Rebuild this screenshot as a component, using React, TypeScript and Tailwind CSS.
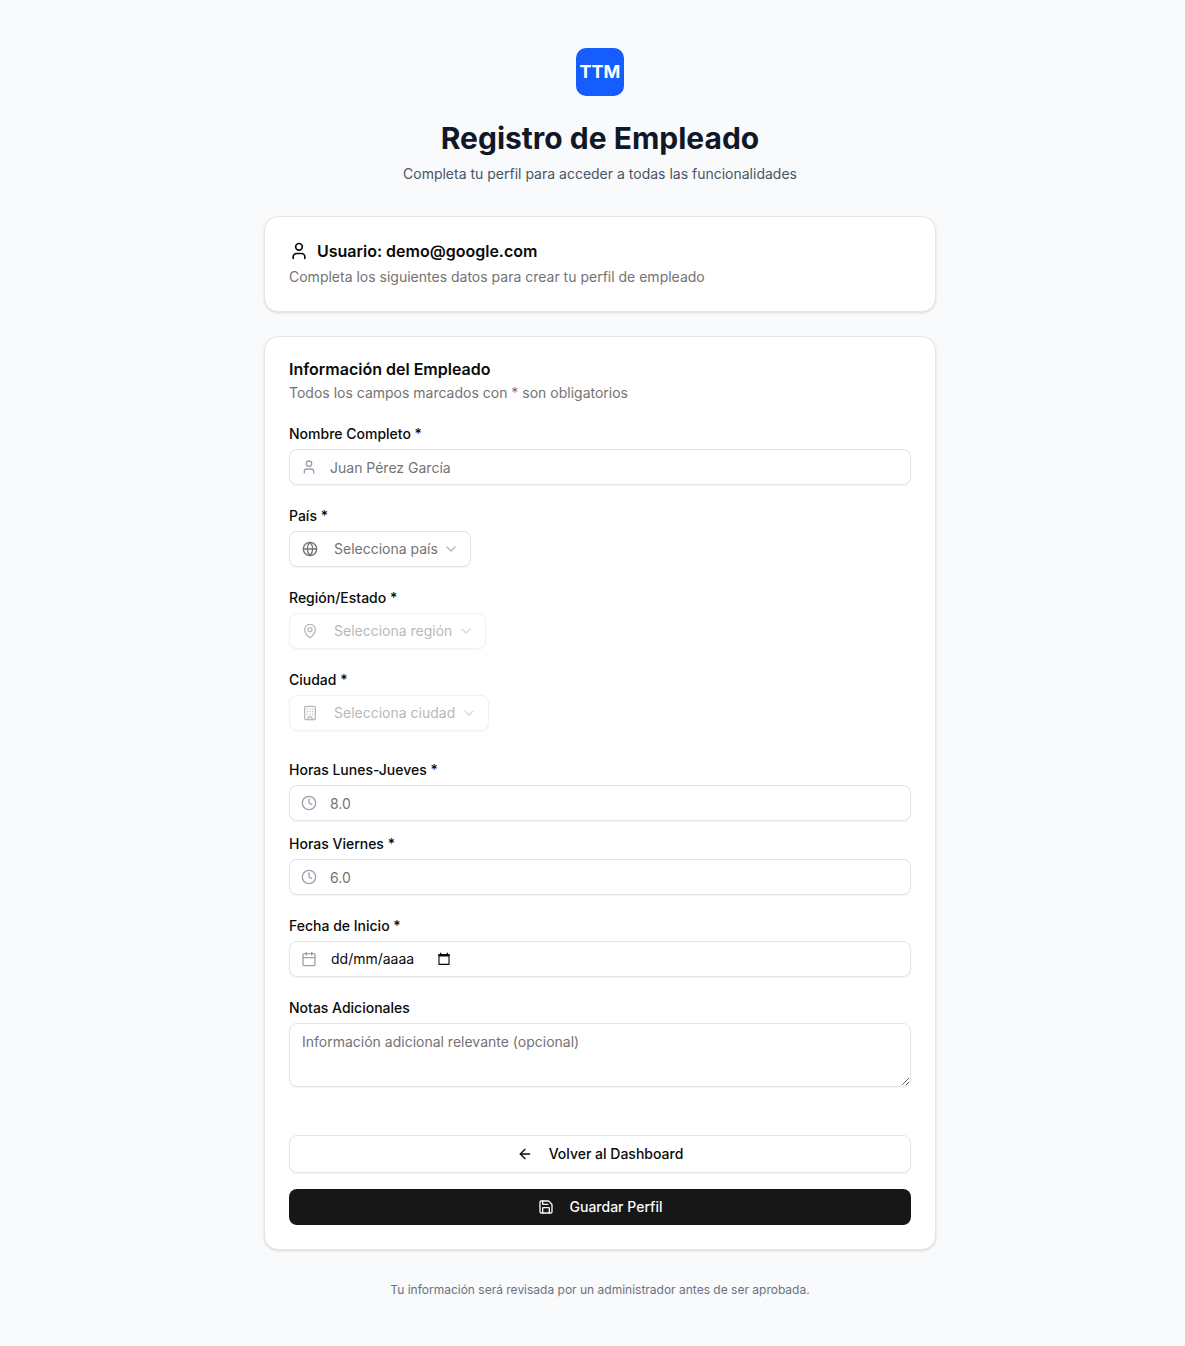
import type { ReactNode } from 'react';
import {
  ArrowLeft,
  Building,
  Calendar,
  ChevronDown,
  Clock,
  Globe,
  MapPin,
  Save,
  User,
  type LucideIcon,
} from 'lucide-react';

const inputBase =
  'block w-full rounded-[8px] border border-[#e5e5e5] bg-white text-sm text-[#0a0a0a] shadow-xs outline-none placeholder:text-[#737373] placeholder:opacity-100 focus:border-[#a1a1a1]';

function Field({ id, label, children }: { id: string; label: string; children: ReactNode }) {
  return (
    <div className="flex flex-col gap-2">
      <label htmlFor={id} className="text-sm leading-[14px] font-medium">
        {label}
      </label>
      {children}
    </div>
  );
}

function IconInput({
  id,
  label,
  placeholder,
  icon: Icon,
}: {
  id: string;
  label: string;
  placeholder: string;
  icon: LucideIcon;
}) {
  return (
    <Field id={id} label={label}>
      <div className="relative">
        <Icon className="pointer-events-none absolute inset-y-0 left-3 my-auto size-4 text-[#99a1af]" />
        <input id={id} placeholder={placeholder} className={`${inputBase} h-9 pr-3 pl-10`} />
      </div>
    </Field>
  );
}

function IconSelect({
  id,
  label,
  placeholder,
  icon: Icon,
  disabled = false,
}: {
  id: string;
  label: string;
  placeholder: string;
  icon: LucideIcon;
  disabled?: boolean;
}) {
  return (
    <Field id={id} label={label}>
      <div className={`relative w-fit text-[#737373] ${disabled ? 'opacity-50' : ''}`}>
        <Icon className="pointer-events-none absolute inset-y-0 left-[13px] my-auto size-4" />
        <select
          id={id}
          disabled={disabled}
          defaultValue=""
          className="block h-9 appearance-none rounded-[8px] border border-[#e5e5e5] bg-white pr-8 pl-11 text-sm shadow-xs outline-none disabled:opacity-100"
        >
          <option value="">{placeholder}</option>
        </select>
        <ChevronDown className="pointer-events-none absolute inset-y-0 right-3 my-auto size-4 opacity-50" />
      </div>
    </Field>
  );
}

function DateField() {
  return (
    <Field id="fecha" label="Fecha de Inicio *">
      <div className="flex h-9 items-center rounded-[8px] border border-[#e5e5e5] bg-white pl-[11px] shadow-xs">
        <Calendar className="mr-3.5 size-4 shrink-0 text-[#99a1af]" />
        <input
          id="fecha"
          placeholder="dd/mm/aaaa"
          className="w-[106px] bg-transparent text-sm outline-none placeholder:text-[#0a0a0a] placeholder:opacity-100"
        />
        <button type="button" aria-label="Abrir calendario">
          <svg viewBox="0 0 14 14" className="size-3.5" fill="none">
            <path d="M2 2.5h10v9.9H2z" stroke="#0a0a0a" strokeWidth="1.1" />
            <path d="M1.5 2h11v2.6h-11zM3 .8h1.3v2H3zM9.7.8H11v2H9.7z" fill="#0a0a0a" />
          </svg>
        </button>
      </div>
    </Field>
  );
}

export default function App() {
  return (
    <div className="min-h-screen bg-[#f9fafb] py-12 pl-[15px] font-['Inter',sans-serif] text-[#0a0a0a]">
      <main className="mx-auto max-w-2xl">
        <header className="flex flex-col items-center text-center">
          <div className="flex size-12 items-center justify-center rounded-[10px] bg-[#155dfc] text-lg font-bold text-white">
            TTM
          </div>
          <h1 className="mt-6 text-3xl leading-9 font-bold text-[#101828]">Registro de Empleado</h1>
          <p className="mt-2 text-sm text-[#4a5565]">Completa tu perfil para acceder a todas las funcionalidades</p>
        </header>

        <section className="mt-8 flex flex-col gap-1.5 rounded-[14px] border border-[#e5e5e5] bg-white p-6 shadow-sm">
          <h2 className="flex items-center gap-2 leading-5 font-semibold">
            <User className="size-5" />
            Usuario: demo@google.com
          </h2>
          <p className="text-sm text-[#737373]">Completa los siguientes datos para crear tu perfil de empleado</p>
        </section>

        <section className="mt-6 rounded-[14px] border border-[#e5e5e5] bg-white p-6 shadow-sm">
          <h2 className="leading-4 font-semibold">Información del Empleado</h2>
          <p className="mt-1.5 text-sm text-[#737373]">Todos los campos marcados con * son obligatorios</p>

          <form className="mt-6 flex flex-col gap-6" onSubmit={(e) => e.preventDefault()}>
            <IconInput id="nombre" label="Nombre Completo *" placeholder="Juan Pérez García" icon={User} />
            <IconSelect id="pais" label="País *" placeholder="Selecciona país" icon={Globe} />
            <IconSelect id="region" label="Región/Estado *" placeholder="Selecciona región" icon={MapPin} disabled />
            <IconSelect id="ciudad" label="Ciudad *" placeholder="Selecciona ciudad" icon={Building} disabled />

            <div className="flex flex-col gap-4 pt-2">
              <IconInput id="horas-lj" label="Horas Lunes-Jueves *" placeholder="8.0" icon={Clock} />
              <IconInput id="horas-v" label="Horas Viernes *" placeholder="6.0" icon={Clock} />
            </div>

            <DateField />

            <Field id="notas" label="Notas Adicionales">
              <textarea
                id="notas"
                placeholder="Información adicional relevante (opcional)"
                className={`${inputBase} h-16 px-3 py-2`}
              />
            </Field>

            <div className="flex flex-col gap-4 pt-6">
              <a
                href="#dashboard"
                className="flex h-[38px] items-center justify-center gap-4 rounded-[8px] border border-[#e5e5e5] bg-white text-sm font-medium shadow-xs"
              >
                <ArrowLeft className="size-4" />
                Volver al Dashboard
              </a>
              <button
                type="submit"
                className="flex h-9 items-center justify-center gap-4 rounded-[8px] bg-[#171717] text-sm font-medium text-[#fafafa]"
              >
                <Save className="size-4" />
                Guardar Perfil
              </button>
            </div>
          </form>
        </section>

        <p className="mt-8 text-center text-xs text-[#6a7282]">
          Tu información será revisada por un administrador antes de ser aprobada.
        </p>
      </main>
    </div>
  );
}
